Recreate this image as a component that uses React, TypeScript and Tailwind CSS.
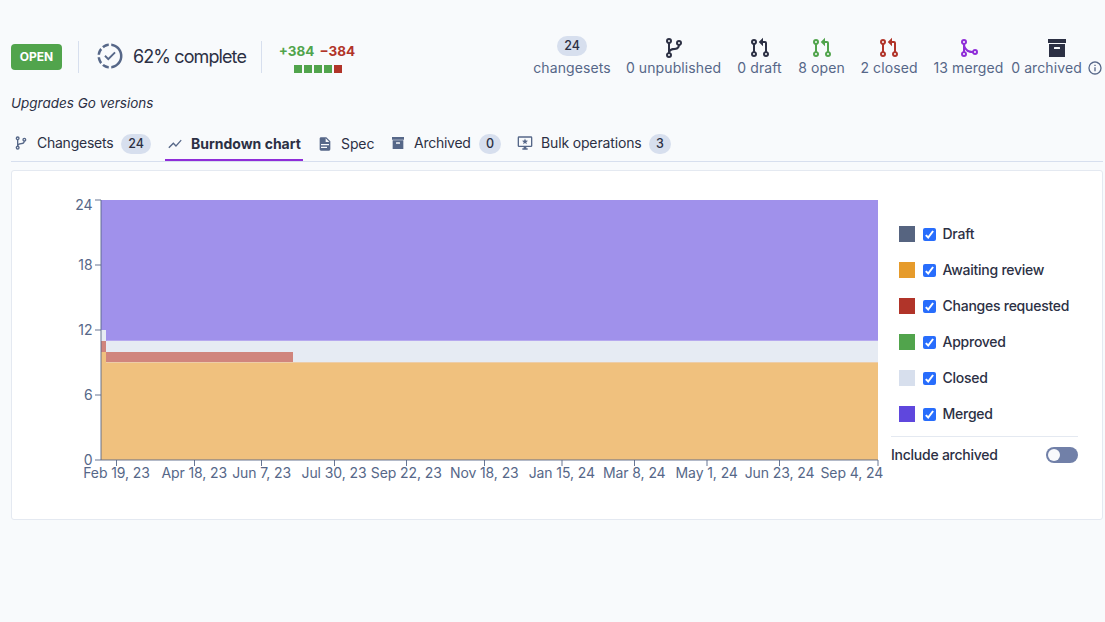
import type { ReactNode } from 'react'

const ICONS = {
  branch:
    'M13,14C9.64,14 8.54,15.35 8.18,16.24C9.25,16.7 10,17.76 10,19A3,3 0 0,1 7,22A3,3 0 0,1 4,19C4,17.69 4.83,16.58 6,16.17V7.83C4.83,7.42 4,6.31 4,5A3,3 0 0,1 7,2A3,3 0 0,1 10,5C10,6.31 9.17,7.42 8,7.83V13.12C8.88,12.47 10.16,12 12,12C14.67,12 15.56,10.66 15.85,9.77C14.77,9.32 14,8.25 14,7A3,3 0 0,1 17,4A3,3 0 0,1 20,7C20,8.34 19.12,9.5 17.91,9.86C17.65,11.29 16.68,14 13,14M7,18A1,1 0 0,0 6,19A1,1 0 0,0 7,20A1,1 0 0,0 8,19A1,1 0 0,0 7,18M7,4A1,1 0 0,0 6,5A1,1 0 0,0 7,6A1,1 0 0,0 8,5A1,1 0 0,0 7,4M17,6A1,1 0 0,0 16,7A1,1 0 0,0 17,8A1,1 0 0,0 18,7A1,1 0 0,0 17,6Z',
  pull: 'M6,3A3,3 0 0,1 9,6C9,7.31 8.17,8.42 7,8.83V15.17C8.17,15.58 9,16.69 9,18A3,3 0 0,1 6,21A3,3 0 0,1 3,18C3,16.69 3.83,15.58 5,15.17V8.83C3.83,8.42 3,7.31 3,6A3,3 0 0,1 6,3M6,5A1,1 0 0,0 5,6A1,1 0 0,0 6,7A1,1 0 0,0 7,6A1,1 0 0,0 6,5M6,17A1,1 0 0,0 5,18A1,1 0 0,0 6,19A1,1 0 0,0 7,18A1,1 0 0,0 6,17M21,18A3,3 0 0,1 18,21A3,3 0 0,1 15,18C15,16.69 15.83,15.58 17,15.17V7H15V10.25L10.75,6L15,1.75V5H17A2,2 0 0,1 19,7V15.17C20.17,15.58 21,16.69 21,18M18,17A1,1 0 0,0 17,18A1,1 0 0,0 18,19A1,1 0 0,0 19,18A1,1 0 0,0 18,17Z',
  merge:
    'M7,3A3,3 0 0,1 10,6C10,7.29 9.19,8.39 8.04,8.81C8.58,13.81 13.08,14.77 15.19,14.96C15.61,13.81 16.71,13 18,13A3,3 0 0,1 21,16A3,3 0 0,1 18,19C16.69,19 15.57,18.16 15.16,17C10.91,16.8 9.44,15.19 8,13.39V15.17C9.17,15.58 10,16.69 10,18A3,3 0 0,1 7,21A3,3 0 0,1 4,18C4,16.69 4.83,15.58 6,15.17V8.83C4.83,8.42 4,7.31 4,6A3,3 0 0,1 7,3M7,5A1,1 0 0,0 6,6A1,1 0 0,0 7,7A1,1 0 0,0 8,6A1,1 0 0,0 7,5M7,17A1,1 0 0,0 6,18A1,1 0 0,0 7,19A1,1 0 0,0 8,18A1,1 0 0,0 7,17M18,15A1,1 0 0,0 17,16A1,1 0 0,0 18,17A1,1 0 0,0 19,16A1,1 0 0,0 18,15Z',
  archive: 'M3,3H21V7H3V3M4,8H20V21H4V8M9.5,11A0.5,0.5 0 0,0 9,11.5V13H15V11.5A0.5,0.5 0 0,0 14.5,11H9.5Z',
  progress:
    'M13 2.03V2.05L13 4.05C17.39 4.59 20.5 8.58 19.96 12.97C19.5 16.61 16.64 19.5 13 19.93V21.93C18.5 21.38 22.5 16.5 21.95 11C21.5 6.25 17.73 2.5 13 2.03M11 2.06C9.05 2.25 7.19 3 5.67 4.26L7.1 5.74C8.22 4.84 9.57 4.26 11 4.06V2.06M4.26 5.67C3 7.19 2.25 9.04 2.05 11H4.05C4.24 9.58 4.8 8.23 5.69 7.1L4.26 5.67M15.5 8.5L10.62 13.38L8.5 11.26L7.44 12.32L10.62 15.5L16.56 9.56L15.5 8.5M2.06 13C2.26 14.96 3.03 16.81 4.27 18.33L5.69 16.9C4.81 15.77 4.24 14.42 4.06 13H2.06M7.1 18.37L5.67 19.74C7.18 21 9.04 21.79 11 22V20C9.58 19.82 8.23 19.25 7.1 18.37Z',
  line: 'M3.5,18.5L9.5,12.5L13.5,16.5L22,6.92L20.59,5.5L13.5,13.5L9.5,9.5L2,17L3.5,18.5Z',
  doc: 'M13,9H18.5L13,3.5V9M6,2H14L20,8V20A2,2 0 0,1 18,22H6C4.89,22 4,21.1 4,20V4C4,2.89 4.89,2 6,2M15,18V16H6V18H15M18,14V12H6V14H18Z',
  monitor:
    'M3,2H21A2,2 0 0,1 23,4V16A2,2 0 0,1 21,18H14V20H16V22H8V20H10V18H3A2,2 0 0,1 1,16V4A2,2 0 0,1 3,2M3,4V16H21V4H3M12,5.3L13.2,8.4L16.5,8.6L13.9,10.7L14.8,13.9L12,12.1L9.2,13.9L10.1,10.7L7.5,8.6L10.8,8.4Z',
  info: 'M11,9H13V7H11M12,20C7.59,20 4,16.41 4,12C4,7.59 7.59,4 12,4C16.41,4 20,7.59 20,12C20,16.41 16.41,20 12,20M12,2A10,10 0 0,0 2,12A10,10 0 0,0 12,22A10,10 0 0,0 22,12A10,10 0 0,0 12,2M11,17H13V11H11V17Z',
}

function Icon({ name, className }: { name: keyof typeof ICONS; className: string }) {
  return (
    <svg viewBox="0 0 24 24" fillRule="evenodd" className={`shrink-0 fill-current ${className}`}>
      <path d={ICONS[name]} />
    </svg>
  )
}

function Stat({ icon, label, width, info }: { icon: ReactNode; label: string; width: string; info?: boolean }) {
  return (
    <div className={`flex shrink-0 flex-col items-center ${width}`}>
      <div className="flex h-[25px] items-center">{icon}</div>
      <div className="-mt-[2px] flex h-5 items-center gap-[5px] whitespace-nowrap text-[14px] tracking-[0.1px] text-[#566788]">
        <span>{label}</span>
        {info && <Icon name="info" className="size-4" />}
      </div>
    </div>
  )
}

function Badge({ children, className }: { children: ReactNode; className: string }) {
  return (
    <span
      className={`flex h-5 items-center justify-center rounded-full bg-[#d7dfee] text-[12.5px] font-medium text-[#2c3044] ${className}`}
    >
      {children}
    </span>
  )
}

const LEGEND = [
  { label: 'Draft', color: 'bg-[#566480]' },
  { label: 'Awaiting review', color: 'bg-[#e69b2b]' },
  { label: 'Changes requested', color: 'bg-[#b13429]' },
  { label: 'Approved', color: 'bg-[#51a44c]' },
  { label: 'Closed', color: 'bg-[#d7dfed]' },
  { label: 'Merged', color: 'bg-[#5f47dd]' },
]

const X_TICKS: [number, number, string][] = [
  [104.5, 104.5, 'Feb 19, 23'],
  [182.5, 182.3, 'Apr 18, 23'],
  [249.5, 249.6, 'Jun 7, 23'],
  [322.5, 322, 'Jul 30, 23'],
  [394.5, 394.3, 'Sep 22, 23'],
  [472.5, 472.3, 'Nov 18, 23'],
  [550, 549.8, 'Jan 15, 24'],
  [622.5, 622.3, 'Mar 8, 24'],
  [695, 694.7, 'May 1, 24'],
  [767.5, 767.5, 'Jun 23, 24'],
  [866, 839.8, 'Sep 4, 24'],
]

const Y_TICKS: [number, number, string][] = [
  [29, 34, '24'],
  [94, 94, '18'],
  [159, 159, '12'],
  [224, 224, '6'],
  [289, 289, '0'],
]

function Chart() {
  return (
    <svg width="876" height="330" className="block shrink-0">
      <path d="M89 29H866V170H94V159H89Z" fill="#a091eb" />
      <path d="M89 159H94V170H866V191.5H281V181H94V170H89Z" fill="#e6ebf3" />
      <path d="M89 170H94V181H281V191.5H94V181H89Z" fill="#d0857d" />
      <path d="M89 181H94V191.5H866V289H89Z" fill="#f0c17e" />
      <path d="M94.5 169.5H866" stroke="#b6a9ef" strokeWidth="1" />
      <path d="M94 191.5H866" stroke="#edcda8" strokeWidth="1" />
      <path d="M89 29V289M89 289H866" fill="none" stroke="#566788" strokeOpacity="0.9" />
      <g stroke="#566788" strokeOpacity="0.9">
        {Y_TICKS.map(([y]) => (
          <line key={y} x1="83" x2="89" y1={y} y2={y} />
        ))}
        {X_TICKS.map(([x]) => (
          <line key={x} x1={x} x2={x} y1="289" y2="295" />
        ))}
      </g>
      <g fill="#566788" fontSize="14">
        {Y_TICKS.map(([y, ty, label]) => (
          <text key={y} x="80.6" y={ty + 5} textAnchor="end">
            {label}
          </text>
        ))}
        {X_TICKS.map(([x, tx, label]) => (
          <text key={x} x={tx} y="307" textAnchor="middle" letterSpacing="-0.1">
            {label}
          </text>
        ))}
      </g>
    </svg>
  )
}

export default function App() {
  return (
    <div className="h-[622px] w-[1105px] overflow-hidden bg-[#f8fafc] pl-[11px] pt-[35px] font-['Inter',sans-serif] text-[14px] leading-5 text-[#2c3044]">
      <header className="flex h-[43px] items-start">
        <div className="mt-[9px] flex h-[26px] w-[51px] items-center justify-center rounded-[4px] bg-[#51a44c] text-[12px] font-bold text-white">
          OPEN
        </div>
        <div className="ml-4 mt-[6px] h-8 w-px bg-[#d7dfee]" />
        <Icon name="progress" className="ml-4 mt-[6px] size-[30px] text-[#566788]" />
        <div className="ml-[8px] mt-[10px] w-[128px] whitespace-nowrap text-[18px] leading-6 tracking-[-0.9px]">
          62% complete
        </div>
        <div className="mt-[6px] h-8 w-px bg-[#d7dfee]" />
        <div className="ml-4 mt-[6px] flex w-[78px] flex-col items-center">
          <div className="flex gap-[5px] whitespace-nowrap text-[13.5px] font-bold">
            <span className="text-[#51a44c]">+384</span>
            <span className="text-[#b13429]">−384</span>
          </div>
          <div className="ml-[2px] mt-[4px] flex gap-[2px]">
            <i className="size-2 bg-[#51a44c]" />
            <i className="size-2 bg-[#51a44c]" />
            <i className="size-2 bg-[#51a44c]" />
            <i className="size-2 bg-[#51a44c]" />
            <i className="size-2 bg-[#b13429]" />
          </div>
        </div>
        <div className="ml-auto mr-[3px] flex gap-4">
          <div className="-mr-px">
            <Stat width="w-[78px]" label="changesets" icon={<Badge className="mb-[3px] w-[30px]">24</Badge>} />
          </div>
          <Stat width="w-[95px]" label="0 unpublished" icon={<Icon name="branch" className="size-6" />} />
          <Stat width="w-[45px]" label="0 draft" icon={<Icon name="pull" className="size-6" />} />
          <Stat width="w-[47px]" label="8 open" icon={<Icon name="pull" className="size-6 text-[#51a44c]" />} />
          <Stat width="w-[56px]" label="2 closed" icon={<Icon name="pull" className="size-6 text-[#b13429]" />} />
          <Stat width="w-[71px]" label="13 merged" icon={<Icon name="merge" className="size-6 text-[#8f2dd8]" />} />
          <div className="-ml-2">
            <Stat width="w-[90px]" label="0 archived" info icon={<Icon name="archive" className="size-6" />} />
          </div>
        </div>
      </header>

      <p className="mt-[15px] text-[13.5px] italic">Upgrades Go versions</p>

      <nav className="mr-[2px] mt-[14px] flex h-[35px] items-start whitespace-nowrap border-b border-[#d7dfee]">
        <div className="flex h-[33px] w-[154px] items-center pl-[2px]">
          <Icon name="branch" className="mb-px size-4 text-[#566788]" />
          <span className="-mt-[2px] ml-2 w-[84px] tracking-[-0.25px]">Changesets</span>
          <Badge className="w-[30px]">24</Badge>
        </div>
        <div className="flex h-[34px] w-[138px] items-center border-b-2 border-[#8f2dd8] pl-[2px] pt-[2px] font-bold">
          <Icon name="line" className="size-4 text-[#566788]" />
          <span className="ml-2">Burndown chart</span>
        </div>
        <div className="flex h-[34px] w-[74px] items-center pl-[14px]">
          <Icon name="doc" className="size-4 text-[#566788]" />
          <span className="ml-2 tracking-[-0.1px]">Spec</span>
        </div>
        <div className="flex h-[33px] w-[126px] items-center pl-[13px]">
          <Icon name="archive" className="mb-px size-4 text-[#566788]" />
          <span className="-mt-[2px] ml-2 w-[65px] tracking-[-0.25px]">Archived</span>
          <Badge className="w-[22px]">0</Badge>
        </div>
        <div className="flex h-[33px] items-center pl-[14px]">
          <Icon name="monitor" className="mb-px size-4 text-[#566788]" />
          <span className="-mt-[2px] ml-2 w-[108px] tracking-[-0.15px]">Bulk operations</span>
          <Badge className="w-[22px]">3</Badge>
        </div>
      </nav>

      <main className="mr-[2px] mt-2 flex h-[350px] rounded-[3px] border border-[#e4e9f1] bg-white">
        <Chart />
        <aside className="ml-[3px] flex w-[187px] flex-col pt-[45px]">
          <ul className="border-b border-[#e4e9f1] pb-[4px] pl-2">
            {LEGEND.map(({ label, color }) => (
              <li key={label} className="flex h-9 items-center whitespace-nowrap font-medium tracking-[-0.25px]">
                <span className={`size-4 ${color}`} />
                <span className="ml-2 mt-px flex size-[13px] items-center justify-center rounded-[2px] bg-[#286dfc]">
                  <svg viewBox="0 0 13 13" className="size-[13px]">
                    <path d="M2.8 7.1 5.2 9.5 10.1 3" fill="none" stroke="white" strokeWidth="2" />
                  </svg>
                </span>
                <span className="ml-[6.5px]">{label}</span>
              </li>
            ))}
          </ul>
          <div className="mt-2 flex h-5 items-center justify-between font-medium tracking-[-0.25px]">
            <span>Include archived</span>
            <span className="flex h-4 w-8 items-center rounded-full bg-[#7180a8] pl-[2px]">
              <i className="size-3 rounded-full bg-[#f8f9fc]" />
            </span>
          </div>
        </aside>
      </main>
    </div>
  )
}
